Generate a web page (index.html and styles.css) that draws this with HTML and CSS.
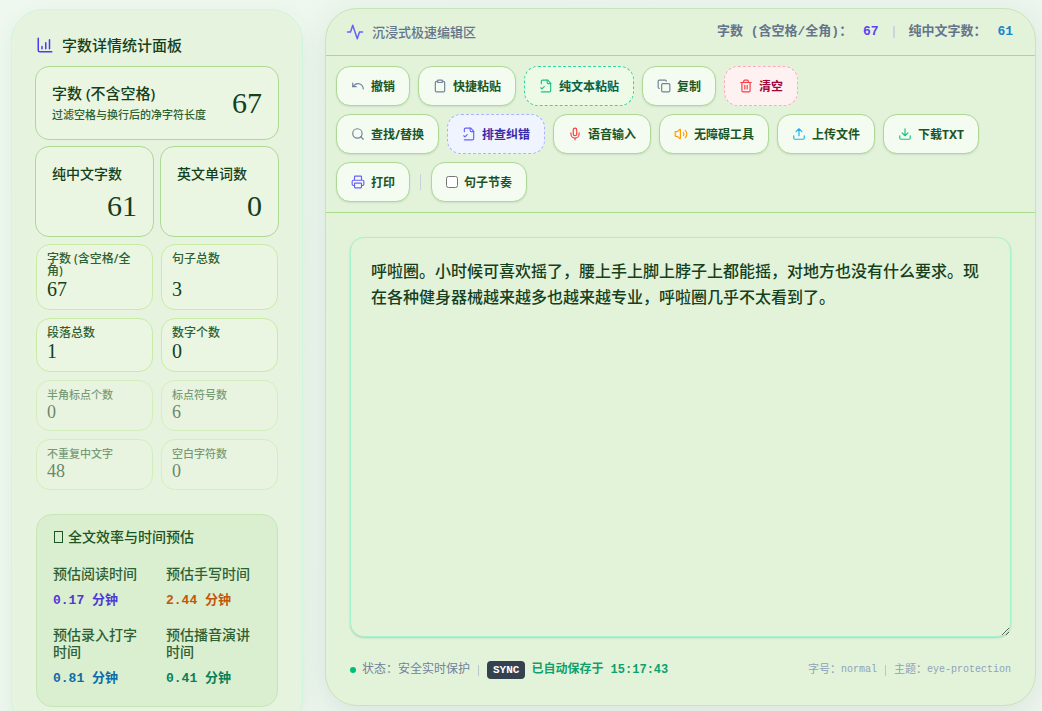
FILE: index.html
```html
<!DOCTYPE html>
<html lang="zh-CN">
<head>
<meta charset="utf-8">
<meta name="viewport" content="width=device-width, initial-scale=1">
<title>字数统计</title>
<link rel="stylesheet" href="styles.css">
</head>
<body>
<div class="layout">
  <aside class="sidebar">
    <h2 class="sidebar-title">
      <svg class="icon icon-lg c-indigo-deep" viewBox="0 0 24 24"><path d="M3 3v16a2 2 0 0 0 2 2h16M8 17v-3M13 17V9M18 17V5"/></svg>
      字数详情统计面板
    </h2>
    <section class="primary">
      <div class="card card-wide">
        <div>
          <h3 class="card-title">字数 (不含空格)</h3>
          <p class="card-note">过滤空格与换行后的净字符长度</p>
        </div>
        <span class="big-num">67</span>
      </div>
      <div class="card card-tall"><h3 class="card-label">纯中文字数</h3><span class="big-num">61</span></div>
      <div class="card card-tall"><h3 class="card-label">英文单词数</h3><span class="big-num">0</span></div>
    </section>
    <section class="secondary">
      <div class="stat"><span class="stat-label">字数 (含空格/全角)</span><span class="stat-num">67</span></div>
      <div class="stat"><span class="stat-label">句子总数</span><span class="stat-num">3</span></div>
      <div class="stat"><span class="stat-label">段落总数</span><span class="stat-num">1</span></div>
      <div class="stat"><span class="stat-label">数字个数</span><span class="stat-num">0</span></div>
      <div class="stat stat-dim"><span class="stat-label">半角标点个数</span><span class="stat-num">0</span></div>
      <div class="stat stat-dim"><span class="stat-label">标点符号数</span><span class="stat-num">6</span></div>
      <div class="stat stat-dim"><span class="stat-label">不重复中文字</span><span class="stat-num">48</span></div>
      <div class="stat stat-dim"><span class="stat-label">空白字符数</span><span class="stat-num">0</span></div>
    </section>
    <section class="estimate">
      <h3 class="estimate-title"><span class="box-glyph"></span>全文效率与时间预估</h3>
      <dl class="times">
        <div><dt>预估阅读时间</dt><dd class="t-indigo">0.17 分钟</dd></div>
        <div><dt>预估手写时间</dt><dd class="t-orange">2.44 分钟</dd></div>
        <div><dt>预估录入打字时间</dt><dd class="t-blue">0.81 分钟</dd></div>
        <div><dt>预估播音演讲时间</dt><dd class="t-green">0.41 分钟</dd></div>
      </dl>
    </section>
  </aside>

  <main class="editor">
    <header class="editor-head">
      <h1 class="editor-title">
        <svg class="icon icon-lg c-indigo" viewBox="0 0 24 24"><path d="M22 12h-4l-3 9L9 3l-3 9H2"/></svg>
        <label for="text">沉浸式极速编辑区</label>
      </h1>
      <div class="head-counts">
        <span>字数 (含空格/全角)： <b class="count n-indigo">67</b></span>
        <span class="head-sep"></span>
        <span>纯中文字数： <b class="count n-blue">61</b></span>
      </div>
    </header>

    <div class="toolbar">
      <div class="tool-row">
        <button class="btn" type="button"><svg class="icon c-slate" viewBox="0 0 24 24"><path d="M3 7v6h6"/><path d="M21 17a9 9 0 0 0-9-9 9 9 0 0 0-6 2.300L3 13"/></svg>撤销</button>
        <button class="btn" type="button"><svg class="icon c-slate" viewBox="0 0 24 24"><rect x="8" y="2" width="8" height="4" rx="1"/><path d="M16 4h2a2 2 0 0 1 2 2v14a2 2 0 0 1-2 2H6a2 2 0 0 1-2-2V6a2 2 0 0 1 2-2h2"/></svg>快捷粘贴</button>
        <button class="btn btn-green" type="button"><svg class="icon c-emerald" viewBox="0 0 24 24"><path d="M4 8V4a2 2 0 0 1 2-2h9l5 5v13a2 2 0 0 1-2 2H4"/><path d="M14 2v4a2 2 0 0 0 2 2h4M3 15l2 2 4-4"/></svg>纯文本粘贴</button>
        <button class="btn" type="button"><svg class="icon c-slate" viewBox="0 0 24 24"><rect x="8" y="8" width="14" height="14" rx="2"/><path d="M4 16a2 2 0 0 1-2-2V4c0-1.100.9-2 2-2h10a2 2 0 0 1 2 2"/></svg>复制</button>
        <button class="btn btn-red" type="button"><svg class="icon c-red" viewBox="0 0 24 24"><path d="M3 6h18M19 6v14a2 2 0 0 1-2 2H7a2 2 0 0 1-2-2V6M8 6V4a2 2 0 0 1 2-2h4a2 2 0 0 1 2 2v2M10 11v6M14 11v6"/></svg>清空</button>
      </div>
      <div class="tool-row">
        <button class="btn" type="button"><svg class="icon c-slate" viewBox="0 0 24 24"><circle cx="11" cy="11" r="8"/><path d="m21 21-4.300-4.300"/></svg>查找/替换</button>
        <button class="btn btn-indigo" type="button"><svg class="icon c-indigo" viewBox="0 0 24 24"><path d="M4 8V4a2 2 0 0 1 2-2h9l5 5v13a2 2 0 0 1-2 2H4"/><path d="M14 2v4a2 2 0 0 0 2 2h4M3 15l2 2 4-4"/></svg>排查纠错</button>
        <button class="btn" type="button"><svg class="icon c-red" viewBox="0 0 24 24"><path d="M12 2a3 3 0 0 0-3 3v7a3 3 0 0 0 6 0V5a3 3 0 0 0-3-3M19 10v2a7 7 0 0 1-14 0v-2M12 19v3"/></svg>语音输入</button>
        <button class="btn" type="button"><svg class="icon c-amber" viewBox="0 0 24 24"><path d="M11 4.700a.7.7 0 0 0-1.200-.5L6.400 7.600A1.400 1.400 0 0 1 5.400 8H3a1 1 0 0 0-1 1v6a1 1 0 0 0 1 1h2.400a1.400 1.400 0 0 1 1 .4l3.400 3.400a.7.7 0 0 0 1.200-.5zM16 9a5 5 0 0 1 0 6M19.400 18.400a9 9 0 0 0 0-12.700"/></svg>无障碍工具</button>
        <button class="btn" type="button"><svg class="icon c-sky" viewBox="0 0 24 24"><path d="M21 15v4a2 2 0 0 1-2 2H5a2 2 0 0 1-2-2v-4M17 8l-5-5-5 5M12 3v12"/></svg>上传文件</button>
        <button class="btn" type="button"><svg class="icon c-emerald" viewBox="0 0 24 24"><path d="M21 15v4a2 2 0 0 1-2 2H5a2 2 0 0 1-2-2v-4M7 10l5 5 5-5M12 15V3"/></svg>下载TXT</button>
        <button class="btn" type="button"><svg class="icon c-indigo" viewBox="0 0 24 24"><path d="M6 18H4a2 2 0 0 1-2-2v-5a2 2 0 0 1 2-2h16a2 2 0 0 1 2 2v5a2 2 0 0 1-2 2h-2M6 9V3a1 1 0 0 1 1-1h10a1 1 0 0 1 1 1v6"/><rect x="6" y="14" width="12" height="8" rx="1"/></svg>打印</button>
        <span class="tool-sep"></span>
        <label class="btn" for="rhythm"><input class="check" type="checkbox" id="rhythm">句子节奏</label>
      </div>
    </div>

    <div class="editor-body">
      <textarea class="text" id="text" spellcheck="false">呼啦圈。小时候可喜欢摇了，腰上手上脚上脖子上都能摇，对地方也没有什么要求。现在各种健身器械越来越多也越来越专业，呼啦圈几乎不太看到了。</textarea>
      <footer class="status">
        <div class="status-left">
          <span class="dot"></span>
          <span>状态：安全实时保护</span>
          <span class="status-sep"></span>
          <span class="badge">SYNC</span>
          <span class="saved">已自动保存于 15:17:43</span>
        </div>
        <div class="status-right">字号：<span class="latin">normal</span><span class="status-sep"></span>主题：<span class="latin">eye-protection</span></div>
      </footer>
    </div>
  </main>
</div>
</body>
</html>
```

FILE: styles.css
```css
* { box-sizing: border-box; }

body {
  margin: 0;
  min-height: 100vh;
  overflow-x: hidden;
  background: linear-gradient(115deg, #eef8ee 0%, #ecf6ee 50%, #eef6ee 100%);
  color: #14401c;
  font-family: "Noto Sans", "Noto Sans CJK SC", sans-serif;
}

body::-webkit-scrollbar { display: none; }

h1, h2, h3, p, dl, dd { margin: 0; }

.layout {
  display: grid;
  grid-template-columns: 292fr 711fr;
  gap: 22px;
  align-items: start;
  padding: 8px 6px 0 11px;
}

.icon {
  width: 14px;
  height: 14px;
  flex: none;
  fill: none;
  stroke: currentColor;
  stroke-width: 2;
  stroke-linecap: round;
  stroke-linejoin: round;
}
.icon-lg { width: 18px; height: 18px; }

.c-slate { color: #71829a; }
.c-indigo { color: #6761fb; }
.c-indigo-deep { color: #4f39f6; }
.c-emerald { color: #18c188; }
.c-red { color: #fb3a42; }
.c-amber { color: #fe9a00; }
.c-sky { color: #1fb0f5; }

/* Sidebar */

.sidebar {
  margin-top: 1px;
  padding: 24px;
  border: 1px solid #cff6df;
  border-radius: 32px;
  background: #e6f3de;
  box-shadow: 0 8px 24px rgba(20, 80, 40, 0.06);
}

.sidebar-title {
  display: flex;
  align-items: center;
  gap: 8px;
  height: 22px;
  margin-bottom: 10px;
  font-size: 15px;
  line-height: 22px;
  font-weight: 500;
}

.primary {
  display: grid;
  grid-template-columns: 1fr 1fr;
  gap: 6px;
  margin: 0 -1px 7px;
}

.card {
  display: flex;
  border: 1px solid #acd994;
  border-radius: 14px;
  background: #eaf6e1;
  padding: 16px;
}
.card-wide {
  grid-column: 1 / -1;
  align-items: center;
  justify-content: space-between;
  height: 74px;
}
.card-tall {
  flex-direction: column;
  justify-content: space-between;
  height: 91px;
  padding: 17px 16px 12px;
}
.card-title {
  font-size: 15px;
  line-height: 24px;
  font-weight: 500;
}
.card-note {
  color: #2e6134;
  font-size: 11px;
  line-height: 20px;
  font-weight: 500;
  white-space: nowrap;
}
.card-label {
  font-size: 14px;
  line-height: 20px;
  font-weight: 500;
}
.big-num {
  align-self: flex-end;
  font-family: "Liberation Serif", serif;
  font-size: 30px;
  line-height: 36px;
}
.card-wide .big-num { align-self: center; }

.secondary {
  display: grid;
  grid-template-columns: 1fr 1fr;
  gap: 8px;
  margin-bottom: 24px;
}
.stat {
  display: flex;
  flex-direction: column;
  justify-content: space-between;
  min-height: 54px;
  padding: 8px 10px;
  border: 1px solid #c8eca6;
  border-radius: 14px;
  background: #eaf6e1;
}
.stat-label {
  color: #2e6134;
  font-size: 12px;
  line-height: 12px;
  font-weight: 500;
}
.stat-num {
  font-family: "Liberation Serif", serif;
  font-size: 20px;
  line-height: 24px;
}
.stat-dim {
  min-height: 51px;
  opacity: 0.6;
}
.stat-dim .stat-label { font-size: 11px; }
.stat-dim .stat-num { font-size: 18px; line-height: 20px; }

.estimate {
  padding: 12px 16px 18px;
  border: 1px solid #c6e6b5;
  border-radius: 16px;
  background: #daefd0;
}
.estimate-title {
  display: flex;
  align-items: center;
  gap: 5px;
  margin-bottom: 18px;
  color: #1c5525;
  font-size: 14px;
  line-height: 20px;
  font-weight: 500;
}
.box-glyph {
  width: 9px;
  height: 12px;
  margin-left: 1px;
  border: 1px solid #1c5525;
}
.times {
  display: grid;
  grid-template-columns: 1fr 1fr;
  gap: 16px 18px;
}
.times dt {
  max-width: 92px;
  color: #2e6134;
  font-size: 14px;
  line-height: 17px;
  font-weight: 500;
}
.times dd {
  margin-top: 10px;
  font-family: "Liberation Mono", "Noto Sans CJK SC", monospace;
  font-size: 13px;
  line-height: 18px;
  font-weight: 700;
}
.t-indigo { color: #4f39d6; }
.t-orange { color: #c2570c; }
.t-blue { color: #0c6ba8; }
.t-green { color: #0b7f58; }

/* Editor */

.editor {
  border: 1px solid #c8e4b8;
  border-radius: 32px;
  background: #e3f3da;
  box-shadow: 0 8px 32px rgba(20, 60, 40, 0.09);
  overflow: hidden;
}

.editor-head {
  display: flex;
  align-items: center;
  justify-content: space-between;
  height: 47px;
  padding: 0 22px 0 20px;
  border-bottom: 1px solid #a8d98c;
  color: #64748b;
}
.editor-title {
  display: flex;
  align-items: center;
  gap: 8px;
  font-size: 13px;
  line-height: 20px;
  font-weight: 500;
}
.head-counts {
  display: flex;
  align-items: center;
  gap: 14px;
  font-family: "Liberation Mono", "Noto Sans CJK SC", monospace;
  font-size: 13px;
  line-height: 20px;
  font-weight: 700;
}
.count { margin-left: 3px; }
.head-sep {
  width: 2px;
  height: 12px;
  background: #cad5e2;
}
.n-indigo { color: #5b45f0; }
.n-blue { color: #1487cc; }

.toolbar {
  display: flex;
  flex-direction: column;
  gap: 8px;
  padding: 10px;
  border-bottom: 1px solid #a8d98c;
}
.tool-row {
  display: flex;
  flex-wrap: wrap;
  align-items: center;
  gap: 8px;
}
.btn {
  display: flex;
  align-items: center;
  gap: 6px;
  height: 40px;
  padding: 0 14px;
  border: 1px solid #acd994;
  border-radius: 14px;
  background: #f4fbf0;
  color: #1c5525;
  font-family: inherit;
  font-size: 12px;
  font-weight: 700;
  white-space: nowrap;
  box-shadow: 0 1px 2px rgba(20, 80, 40, 0.12);
  cursor: pointer;
}
.btn-green {
  border: 1px dashed #34d8a0;
  background: #edfbe6;
  color: #066046;
  box-shadow: none;
}
.btn-red {
  border: 1px dashed #ffabb8;
  background: #fef1f2;
  color: #a0063a;
  box-shadow: none;
}
.btn-indigo {
  border: 1px dashed #a8b4ff;
  background: #f0f4fe;
  color: #392ba8;
  box-shadow: none;
}
.tool-sep {
  width: 1px;
  height: 16px;
  margin: 0 2px;
  background: #c3d2dc;
}
.check {
  width: 12px;
  height: 12px;
  margin: 0;
}

.editor-body { padding: 24px 24px 26px; }

.text {
  display: block;
  width: 100%;
  height: 400px;
  padding: 20px;
  border: 1px solid #a4f4cf;
  border-radius: 14px;
  outline: none;
  background: #e3f3da;
  color: #14401c;
  font-family: inherit;
  font-size: 16px;
  line-height: 26px;
  font-weight: 500;
  resize: vertical;
  box-shadow: 0 1px 2px rgba(20, 120, 80, 0.25);
}

.status {
  display: flex;
  align-items: center;
  justify-content: space-between;
  margin-top: 24px;
  color: #71829a;
  font-family: "Liberation Mono", "Noto Sans CJK SC", monospace;
  font-size: 12px;
  line-height: 18px;
}
.status-left {
  display: flex;
  align-items: center;
  gap: 6px;
}
.dot {
  width: 6px;
  height: 6px;
  border-radius: 50%;
  background: #00bc7d;
}
.status-sep {
  width: 1px;
  height: 11px;
  margin: 0 2px;
  background: #b5c8cc;
}
.badge {
  padding: 0 6px;
  border-radius: 4px;
  background: #36414f;
  color: #ffffff;
  font-size: 11px;
  font-weight: 700;
}
.saved {
  color: #10a06c;
  font-weight: 700;
}
.status-right {
  display: flex;
  align-items: center;
  color: #90a1b9;
  font-size: 11px;
}
.status-right .status-sep { margin: 0 8px; }
.latin { font-size: 10px; }
```
